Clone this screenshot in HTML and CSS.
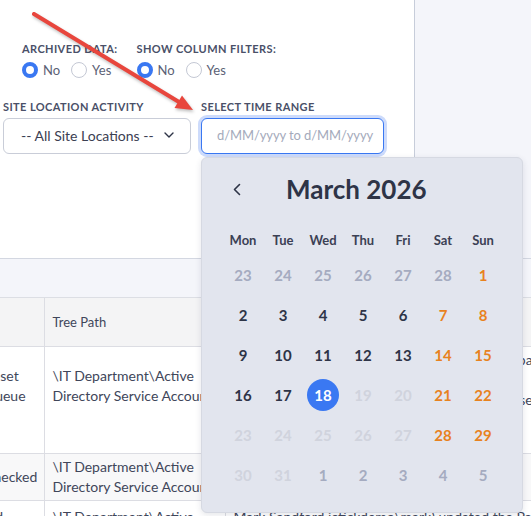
FILE: index.html
```html
<!DOCTYPE html>
<html lang="en">
<head>
    <meta charset="UTF-8">
    <meta name="viewport" content="width=device-width, initial-scale=1.0">
    <title>Activity Log</title>
    <link rel="stylesheet" href="styles.css">
</head>
<body>
    <div class="page">
        <section class="top">
            <div class="filters">
                <div class="toggles">
                    <div class="toggle">
                        <span class="label">Archived Data:</span>
                        <div class="radios">
                            <label class="radio"><span class="dot checked"></span>No</label>
                            <label class="radio"><span class="dot"></span>Yes</label>
                        </div>
                    </div>
                    <div class="toggle">
                        <span class="label">Show Column Filters:</span>
                        <div class="radios">
                            <label class="radio"><span class="dot checked"></span>No</label>
                            <label class="radio"><span class="dot"></span>Yes</label>
                        </div>
                    </div>
                </div>

                <div class="fields">
                    <div class="field">
                        <span class="label">Site Location Activity</span>
                        <div class="select">
                            <span>-- All Site Locations --</span>
                            <svg width="10" height="6" viewBox="0 0 10 6"><path d="M1 1l4 4 4-4" fill="none" stroke="#2e3447" stroke-width="1.4" stroke-linecap="round" stroke-linejoin="round"/></svg>
                        </div>
                    </div>
                    <div class="field range">
                        <span class="label">Select Time Range</span>
                        <input class="date-input" type="text" placeholder="d/MM/yyyy to d/MM/yyyy" readonly>

                        <div class="calendar">
                            <div class="cal-head">
                                <button class="prev">
                                    <svg width="8" height="13" viewBox="0 0 8 13"><path d="M6.5 1.5L1.5 6.5l5 5" fill="none" stroke="#2e3447" stroke-width="1.6" stroke-linecap="round" stroke-linejoin="round"/></svg>
                                </button>
                                <span class="month">March 2026</span>
                            </div>
                            <div class="weekdays">
                                <span>Mon</span><span>Tue</span><span>Wed</span><span>Thu</span><span>Fri</span><span>Sat</span><span>Sun</span>
                            </div>
                            <div class="days">
                                <span class="other">23</span><span class="other">24</span><span class="other">25</span><span class="other">26</span><span class="other">27</span><span class="other">28</span><span class="weekend">1</span>
                                <span>2</span><span>3</span><span>4</span><span>5</span><span>6</span><span class="weekend">7</span><span class="weekend">8</span>
                                <span>9</span><span>10</span><span>11</span><span>12</span><span>13</span><span class="weekend">14</span><span class="weekend">15</span>
                                <span>16</span><span>17</span><span class="today">18</span><span class="off">19</span><span class="off">20</span><span class="weekend">21</span><span class="weekend">22</span>
                                <span class="off">23</span><span class="off">24</span><span class="off">25</span><span class="off">26</span><span class="off">27</span><span class="weekend">28</span><span class="weekend">29</span>
                                <span class="off">30</span><span class="off">31</span><span class="other">1</span><span class="other">2</span><span class="other">3</span><span class="other">4</span><span class="other">5</span>
                            </div>
                        </div>
                    </div>
                </div>
            </div>
            <div class="side"></div>
        </section>

        <div class="band"></div>

        <div class="table-wrap">
            <table class="log">
                <colgroup>
                    <col class="col-action">
                    <col class="col-path">
                    <col>
                </colgroup>
                <thead>
                    <tr>
                        <th>Action</th>
                        <th>Tree Path</th>
                        <th>Description</th>
                    </tr>
                </thead>
                <tbody>
                    <tr class="tall">
                        <td class="lift">Send Password Reset<br>Sent to a Reset Queue</td>
                        <td class="lift">\IT Department\Active<br>Directory Service Account</td>
                        <td class="desc">Mark Sandford (ictickdemo\mark) requested a password<br>reset for the account, the request was put into<br>the approval queue, waiting for an admin to Reset<br>the password.<br>&nbsp;</td>
                    </tr>
                    <tr class="alt">
                        <td>Account Status Checked</td>
                        <td>\IT Department\Active<br>Directory Service Account</td>
                        <td>Password checked against the policy rules, ns</td>
                    </tr>
                    <tr class="last">
                        <td>Password Updated</td>
                        <td>\IT Department\Active<br>Directory Service Account</td>
                        <td>Mark Sandford ictickdemo\mark) updated the Password</td>
                    </tr>
                </tbody>
            </table>
        </div>

        <!-- callout arrow pointing at the time range field -->
        <svg class="arrow" width="200" height="120" viewBox="0 0 200 120">
            <line x1="34" y1="14" x2="179" y2="102" stroke="#e8463d" stroke-width="4" stroke-linecap="round"/>
            <polygon points="193,110 174.5,108 182,95.5" fill="#e8463d"/>
        </svg>
    </div>
</body>
</html>
```

FILE: styles.css
```css
body {
    margin: 0;
    font-family: 'Lato', 'Noto Sans', sans-serif;
    color: #2e3447;
    background: #ffffff;
    overflow: hidden;
}

.page {
    position: relative;
    width: 531px;
    height: 516px;
    overflow: hidden;
}

/* top filter panel */
.top {
    display: flex;
    height: 258px;
    border-bottom: 1px solid #d3d7e1;
}

.filters {
    width: 414px;
    background: white;
}

.side {
    flex: 1;
    background: #f4f5fa;
    border-left: 1px solid #c7cdda;
}

.label {
    display: block;
    font-size: 11px;
    line-height: 14px;
    font-weight: 700;
    text-transform: uppercase;
    color: #4a5068;
    letter-spacing: 0.4px;
}

.toggles {
    display: flex;
    gap: 19px;
    padding: 42px 0 0 22px;
}

.radios {
    display: flex;
    gap: 11px;
    margin-top: 5px;
}

.radio {
    display: flex;
    align-items: center;
    gap: 5px;
    font-size: 13px;
    line-height: 18px;
    color: #5b6175;
}

.dot {
    width: 14px;
    height: 14px;
    border: 1px solid #c4c8d4;
    border-radius: 50%;
    background: white;
}

.dot.checked {
    width: 8px;
    height: 8px;
    border: 4px solid #3a78f2;
}

.fields {
    display: flex;
    gap: 10px;
    padding: 21px 0 0 3px;
}

.field {
    display: flex;
    flex-direction: column;
    gap: 4px;
}

.select {
    width: 188px;
    height: 36px;
    box-sizing: border-box;
    border: 1px solid #c9cdd8;
    border-radius: 6px;
    display: flex;
    align-items: center;
    justify-content: space-between;
    padding: 0 16px 2px 17px;
    font-size: 14px;
    color: #3b4052;
}

.range {
    position: relative;
}

.date-input {
    width: 183px;
    height: 36px;
    box-sizing: border-box;
    border: 1px solid #3a78f2;
    border-radius: 6px;
    box-shadow: 0 0 0 3px #cddbfb;
    outline: none;
    padding: 0 0 2px 15px;
    font-family: inherit;
    font-size: 13px;
    letter-spacing: -0.1px;
    color: #2e3447;
}

.date-input::placeholder {
    color: #a4aabb;
}

/* date picker dropdown */
.calendar {
    position: absolute;
    top: 57px;
    left: 0;
    width: 322px;
    height: 356px;
    box-sizing: border-box;
    padding: 16px 21px 18px;
    background: #e2e5ee;
    border: 1px solid #d6d9e2;
    border-radius: 6px;
    box-shadow: 0 2px 6px rgba(40, 50, 80, 0.12);
    z-index: 5;
}

.cal-head {
    display: flex;
    align-items: center;
    height: 30px;
}

.prev {
    width: 28px;
    height: 30px;
    border: none;
    background: none;
    padding: 0;
    display: flex;
    align-items: center;
    justify-content: center;
}

.month {
    margin-left: 35px;
    font-size: 26px;
    font-weight: 700;
    color: #2e3447;
}

.weekdays,
.days {
    display: grid;
    grid-template-columns: repeat(7, 40px);
}

.weekdays {
    margin-top: 21px;
}

.weekdays span {
    height: 30px;
    line-height: 30px;
    text-align: center;
    font-size: 13px;
    font-weight: 700;
    color: #3b4054;
}

.days span {
    height: 40px;
    display: flex;
    align-items: center;
    justify-content: center;
    font-size: 15px;
    font-weight: 700;
    color: #2e3447;
}

.days .other {
    color: #a5abc0;
}

.days .off {
    color: #d0d3dd;
}

.days .weekend {
    color: #e8821e;
}

.days .today {
    color: white;
    position: relative;
    z-index: 0;
}

.days .today::before {
    content: '';
    position: absolute;
    width: 32px;
    height: 32px;
    border-radius: 50%;
    background: #3a78f2;
    z-index: -1;
}

.band {
    height: 38px;
    background: #f4f5fa;
    border-bottom: 1px solid #dcdee4;
}

/* activity table */
.log {
    border-collapse: collapse;
    margin-left: -120px;
    table-layout: fixed;
    width: 800px;
    font-size: 14px;
    line-height: 20px;
    color: #40465a;
}

.col-action { width: 164px; }
.col-path { width: 181px; }

.log th {
    height: 48px;
    box-sizing: border-box;
    background: #f4f4f5;
    font-weight: 400;
    font-size: 13px;
    text-align: left;
    padding: 0 8px;
    border-right: 1px solid #dcdde3;
    border-bottom: 1px solid #dcdde3;
}

.log td {
    padding: 3px 8px;
    vertical-align: middle;
    white-space: nowrap;
    overflow: hidden;
    border-right: 1px solid #dcdde3;
    border-bottom: 1px solid #dcdde3;
}

.log tr.tall {
    height: 105px;
}

.log tr.tall td {
    vertical-align: top;
}

.log tr.tall td.lift {
    padding-top: 19px;
}

.log tr.tall td.desc {
    padding-top: 3px;
}

.log tr.alt {
    height: 47px;
}

.log tr.alt td {
    background: #f8f8f9;
}

.log tr.last td {
    vertical-align: top;
    padding-top: 6px;
}

.arrow {
    position: absolute;
    top: 0;
    left: 0;
    pointer-events: none;
    filter: drop-shadow(1px 2px 1.5px rgba(0, 0, 0, 0.25));
    z-index: 10;
}
```
